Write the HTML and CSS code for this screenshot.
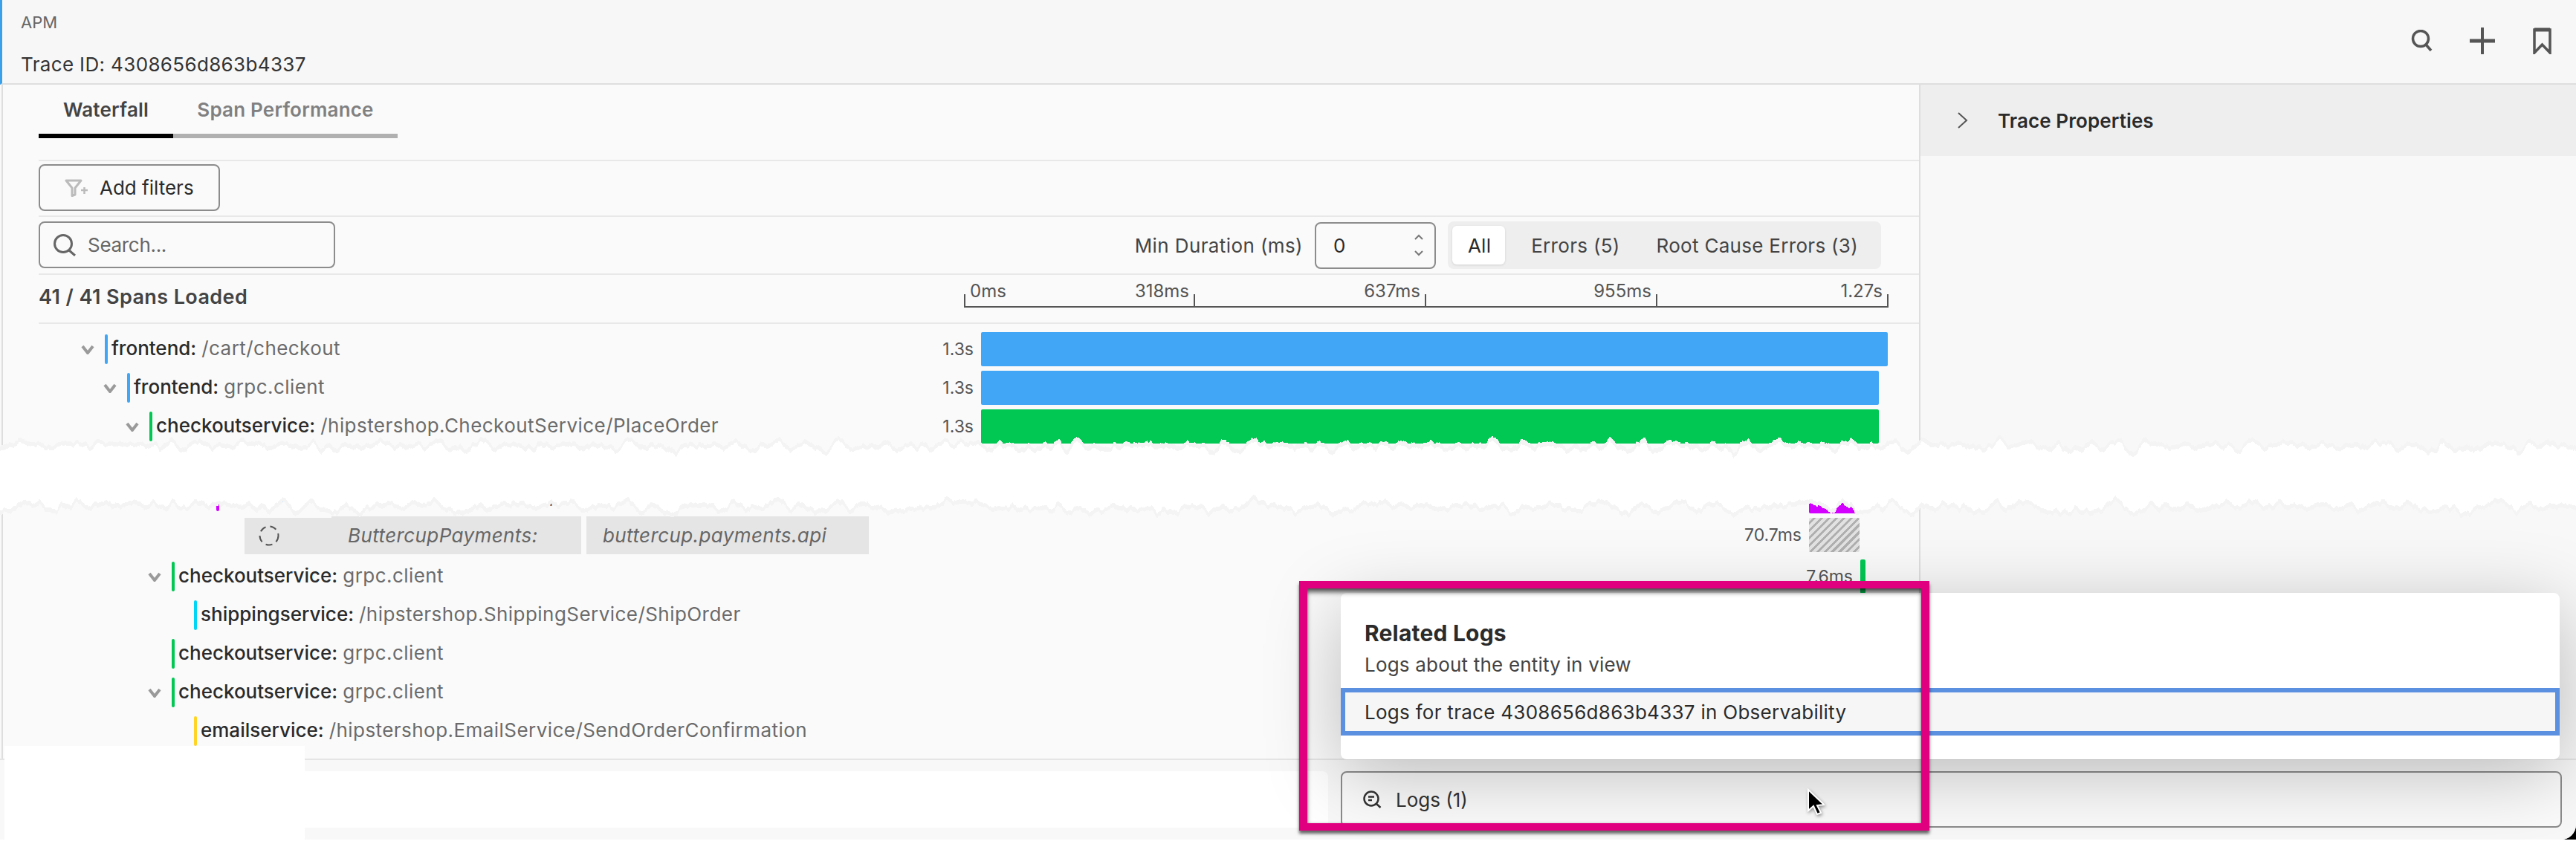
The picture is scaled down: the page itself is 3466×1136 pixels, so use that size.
FILE: index.html
```html
<!DOCTYPE html>
<html lang="en">
<head>
  <meta charset="UTF-8" />
  <title>APM - Trace 4308656d863b4337</title>
  <link rel="stylesheet" href="styles.css">
</head>
<body>
  <div class="app">
    <header class="top-bar">
      <div class="top-title">
        <span class="crumb">APM</span>
        <span class="trace-id">Trace ID: 4308656d863b4337</span>
      </div>
      <div class="top-actions">
        <svg class="icon-search" viewBox="0 0 30 30"><circle cx="13" cy="12" r="10.5"/><path d="M20 20l7 8"/></svg>
        <svg class="icon-plus" viewBox="0 0 36 36"><path class="thin" d="M18 1v34"/><path class="thick" d="M1 18h34"/></svg>
        <svg class="icon-bookmark" viewBox="0 0 25 36"><path d="M2 3h21v31l-10.500-11l-10.500 11z"/><path class="thick" d="M2 3h21"/></svg>
      </div>
    </header>

    <div class="content">
      <main class="main">
        <div class="tabs">
          <div class="tab active">Waterfall</div>
          <div class="tab">Span Performance</div>
        </div>

        <div class="filters">
          <button class="btn-filter">
            <svg class="icon-filter" viewBox="0 0 32 24"><path d="M2 2h20l-8 10v9l-4 1.500v-10.500z"/><path class="plus" d="M22 15h9M26.500 11v9"/></svg>
            Add filters
          </button>
        </div>

        <div class="controls">
          <div class="search">
            <svg viewBox="0 0 32 30"><circle cx="14" cy="13" r="11.500"/><path d="M22 22l8 7"/></svg>
            <span>Search...</span>
          </div>
          <div class="controls-right">
            <span class="min-label">Min Duration (ms)</span>
            <div class="number-input">
              <span>0</span>
              <div class="spinner">
                <svg viewBox="0 0 12 8"><path d="M1 7l5-5l5 5"/></svg>
                <svg viewBox="0 0 12 8"><path d="M1 1l5 5l5-5"/></svg>
              </div>
            </div>
            <div class="segments">
              <div class="seg active">All</div>
              <div class="seg">Errors (5)</div>
              <div class="seg">Root Cause Errors (3)</div>
            </div>
          </div>
        </div>

        <div class="ruler-row">
          <span class="loaded">41 / 41 Spans Loaded</span>
          <div class="ruler">
            <div class="ruler-cell first"><span>0ms</span><span>318ms</span></div>
            <div class="ruler-cell"><span>637ms</span></div>
            <div class="ruler-cell"><span>955ms</span></div>
            <div class="ruler-cell"><span>1.27s</span></div>
          </div>
        </div>

        <div class="rows">
          <div class="row">
            <div class="name depth-0">
              <svg class="chev" viewBox="0 0 18 13"><path d="M2 2l7 9l7-9"/></svg>
              <i class="tick blue"></i><b>frontend:</b> <span>/cart/checkout</span>
            </div>
            <div class="timeline"><span class="dur">1.3s</span><div class="bar blue" style="width:1220px;margin-right:1px"></div></div>
          </div>
          <div class="row">
            <div class="name depth-1">
              <svg class="chev" viewBox="0 0 18 13"><path d="M2 2l7 9l7-9"/></svg>
              <i class="tick blue"></i><b>frontend:</b> <span>grpc.client</span>
            </div>
            <div class="timeline"><span class="dur">1.3s</span><div class="bar blue" style="width:1208px;margin-right:13px"></div></div>
          </div>
          <div class="row">
            <div class="name depth-2">
              <svg class="chev" viewBox="0 0 18 13"><path d="M2 2l7 9l7-9"/></svg>
              <i class="tick green"></i><b>checkoutservice:</b> <span>/hipstershop.CheckoutService/PlaceOrder</span>
            </div>
            <div class="timeline"><span class="dur">1.3s</span><div class="bar green" style="width:1208px;margin-right:13px"></div></div>
          </div>

          <!-- under the torn strip -->
          <div class="row after-tear">
            <div class="name depth-5">
              <i class="tick purple"></i><b class="torn-name">frontend:</b> <span>buttercup.payments.api</span>
            </div>
            <div class="timeline"><div class="bar purple" style="width:68px;margin-right:39px"></div></div>
          </div>
          <div class="row">
            <div class="inferred">
              <div class="inf-cell inf-icon"><svg viewBox="0 0 28 28"><circle cx="14" cy="14" r="12.500"/></svg></div>
              <div class="inf-cell inf-service">ButtercupPayments:</div>
              <div class="inf-cell inf-op">buttercup.payments.api</div>
            </div>
            <div class="timeline"><span class="dur">70.7ms</span><div class="bar hatch" style="width:68px;margin-right:39px"></div></div>
          </div>
          <div class="row gap-top">
            <div class="name depth-3">
              <svg class="chev" viewBox="0 0 18 13"><path d="M2 2l7 9l7-9"/></svg>
              <i class="tick green"></i><b>checkoutservice:</b> <span>grpc.client</span>
            </div>
            <div class="timeline"><span class="dur">7.6ms</span><div class="bar green" style="width:7px;margin-right:31px"></div></div>
          </div>
          <div class="row">
            <div class="name depth-4"><i class="tick cyan"></i><b>shippingservice:</b> <span>/hipstershop.ShippingService/ShipOrder</span></div>
          </div>
          <div class="row">
            <div class="name depth-3 no-chev"><i class="tick green"></i><b>checkoutservice:</b> <span>grpc.client</span></div>
          </div>
          <div class="row">
            <div class="name depth-3">
              <svg class="chev" viewBox="0 0 18 13"><path d="M2 2l7 9l7-9"/></svg>
              <i class="tick green"></i><b>checkoutservice:</b> <span>grpc.client</span>
            </div>
          </div>
          <div class="row">
            <div class="name depth-4"><i class="tick yellow"></i><b>emailservice:</b> <span>/hipstershop.EmailService/SendOrderConfirmation</span></div>
          </div>
        </div>
      </main>

      <aside class="side">
        <div class="side-head">
          <svg viewBox="0 0 14 22"><path d="M1 1l11 10l-11 10"/></svg>
          <span>Trace Properties</span>
        </div>
      </aside>
    </div>

    <footer class="bottom-bar">
      <div class="bottom-left"></div>
      <div class="logs-btn">
        <svg viewBox="0 0 25 24"><circle cx="11" cy="11" r="9.500"/><path d="M7 8.500h8M7 13h5M17.500 17.500l6 5.500"/></svg>
        <span>Logs (1)</span>
      </div>
    </footer>

    <!-- Hidden by default in the app, open here -->
    <div class="popover">
      <h2>Related Logs</h2>
      <p>Logs about the entity in view</p>
      <div class="pop-item">Logs for trace 4308656d863b4337 in Observability</div>
    </div>

    <div class="callout"></div>
    <svg class="cursor" viewBox="0 0 24 38"><path d="M2 2v28l7-6l5 11l5-2l-5-10l9-1z"/></svg>

    <svg class="tear" viewBox="0 0 3466 150">
      <filter id="rough" filterUnits="userSpaceOnUse" x="0" y="0" width="3466" height="150" color-interpolation-filters="sRGB">
        <feTurbulence type="fractalNoise" baseFrequency="0.05 0.004" numOctaves="5" seed="7"/>
        <feColorMatrix type="matrix" values="0 0 0 0 0.5  0 1 0 0 0  0 0 0 0 0.5  0 0 0 0 1"/>
        <feDisplacementMap in="SourceGraphic" scale="34" xChannelSelector="R" yChannelSelector="G"/>
      </filter>
      <rect class="tear-haze" x="-60" y="27" width="3590" height="89" filter="url(#rough)"/>
      <rect class="tear-white" x="-60" y="33" width="3590" height="77" filter="url(#rough)"/>
    </svg>

    <div class="patch"></div>
  </div>
</body>
</html>
```

FILE: styles.css
```css
html, body {
  margin: 0;
  padding: 0;
  height: 100%;
  background: #fff;
  font-family: Inter, 'Noto Sans', sans-serif;
  color: #2b2b2b;
  overflow: hidden;
}

body {
  background: linear-gradient(#000, #000) right 0 top 1110px / 20px 20px no-repeat #fff;
}

.app {
  position: relative;
  width: 3466px;
  height: 1130px;
  background: #f9f9f9;
  border-bottom-right-radius: 20px;
  overflow: hidden;
  display: flex;
  flex-direction: column;
  font-size: 26px;
}

/* TOP BAR */
.top-bar {
  height: 112px;
  flex: none;
  display: flex;
  justify-content: space-between;
  align-items: center;
  padding: 0 33px 0 25px;
  background: #f7f7f7;
  border-left: 3px solid #3aa0ea;
  border-bottom: 2px solid #dedede;
}

.top-title {
  display: flex;
  flex-direction: column;
  gap: 25px;
  padding-top: 9px;
}

.crumb {
  font-size: 22px;
  line-height: 28px;
  color: #666;
}

.trace-id {
  font-size: 26px;
  line-height: 36px;
  letter-spacing: 0.35px;
  color: #333;
}

.top-actions {
  display: flex;
  align-items: center;
  gap: 48px;
  padding-bottom: 2px;
}

.top-actions svg {
  fill: none;
  stroke: #555;
  stroke-width: 3.5;
  display: block;
}

.icon-search { width: 30px; height: 30px; }
.icon-plus { width: 36px; height: 36px; }
.icon-bookmark { width: 25px; height: 36px; margin-left: 2px; }
.top-actions .thin { stroke-width: 4; stroke-linecap: round; }
.top-actions .thick { stroke-width: 5; }

/* MAIN AREA */
.content {
  height: 907px;
  flex: none;
  display: flex;
}

.main {
  width: 2578px;
  flex: none;
  border-left: 2px solid #dedede;
  margin-left: 2px;
  background: #fafafa;
}

.tabs,
.filters,
.controls,
.ruler-row {
  margin-left: 48px;
  border-bottom: 2px solid #e8e8e8;
  box-sizing: border-box;
  display: flex;
}

.tabs {
  height: 103px;
  padding-top: 6px;
  align-items: flex-start;
}

.tab {
  height: 54px;
  padding: 0 0 6px;
  display: flex;
  align-items: center;
  justify-content: center;
  width: 302px;
  border-bottom: 6px solid #b0b0b0;
  font-weight: 600;
  letter-spacing: 0.2px;
  color: #808080;
}

.tab.active {
  width: 181px;
  color: #444;
  border-bottom-color: #000;
}

.filters {
  height: 75px;
  padding-top: 4px;
  align-items: flex-start;
}

.btn-filter {
  width: 244px;
  height: 63px;
  box-sizing: border-box;
  border: 2px solid #8c8c8c;
  border-radius: 8px;
  background: transparent;
  padding: 0 0 0 33px;
  display: flex;
  align-items: center;
  gap: 15px;
  font: inherit;
  color: #2b2b2b;
}

.icon-filter {
  width: 32px;
  height: 24px;
  fill: none;
  stroke: #bbb;
  stroke-width: 3;
  stroke-linejoin: round;
}

.icon-filter .plus { stroke-width: 2.5; }

.controls {
  height: 78px;
  padding-top: 6px;
  align-items: flex-start;
  justify-content: space-between;
}

.search {
  width: 399px;
  height: 63px;
  box-sizing: border-box;
  border: 2px solid #8c8c8c;
  border-radius: 8px;
  display: flex;
  align-items: center;
  gap: 15px;
  padding-left: 17px;
  letter-spacing: -0.3px;
  color: #666;
}

.search svg {
  width: 32px;
  height: 30px;
  fill: none;
  stroke: #666;
  stroke-width: 3;
}

.controls-right {
  display: flex;
  align-items: center;
  gap: 16px;
  margin-right: 51px;
}

.min-label {
  letter-spacing: 0.4px;
  color: #444;
}

.number-input {
  width: 163px;
  height: 63px;
  box-sizing: border-box;
  border: 2px solid #8c8c8c;
  border-radius: 8px;
  display: flex;
  align-items: center;
  justify-content: space-between;
  padding: 0 15px 0 23px;
}

.spinner {
  display: flex;
  flex-direction: column;
  gap: 14px;
}

.spinner svg {
  display: block;
  width: 12px;
  height: 8px;
  fill: none;
  stroke: #777;
  stroke-width: 2;
}

.segments {
  width: 583px;
  height: 64px;
  box-sizing: border-box;
  padding: 6px;
  background: #eee;
  border-radius: 8px;
  display: flex;
  align-items: center;
  letter-spacing: 0.3px;
  color: #444;
}

.seg {
  height: 52px;
  display: flex;
  align-items: center;
  padding: 0 25px;
  white-space: nowrap;
}

.seg.active {
  width: 80px;
  box-sizing: border-box;
  justify-content: center;
  padding: 0 0 0 2px;
  background: #fff;
  border-radius: 6px;
  color: #2b2b2b;
  box-shadow: 0 1px 3px rgba(0,0,0,0.12);
}

.seg.active + .seg { padding-left: 35px; }
.seg.active + .seg + .seg { padding-left: 24px; }

.ruler-row {
  height: 66px;
  justify-content: space-between;
  align-items: flex-start;
}

.loaded {
  font-size: 27px;
  font-weight: 600;
  letter-spacing: 0.4px;
  line-height: 32px;
  margin-top: 14px;
  color: #444;
}

.ruler {
  width: 1244px;
  margin: 4px 41px 0 0;
  display: flex;
  border-bottom: 2px solid #555;
}

.ruler-cell {
  flex: 1;
  height: 32px;
  display: flex;
  justify-content: flex-end;
  align-items: flex-start;
  padding: 6px 8px 0;
  font-size: 24px;
  line-height: 24px;
  color: #555;
  background: linear-gradient(#555, #555) right bottom / 2px 16px no-repeat;
}

.ruler-cell.first {
  justify-content: space-between;
  background:
    linear-gradient(#555, #555) right bottom / 2px 16px no-repeat,
    linear-gradient(#555, #555) left bottom / 2px 16px no-repeat;
}

/* WATERFALL ROWS */
.rows {
  padding: 8px 41px 0 0;
  margin-left: 48px;
}

.row {
  height: 52px;
  display: flex;
  align-items: center;
  justify-content: space-between;
}

.row.after-tear { margin-top: 42px; }
.row.gap-top { margin-top: 4px; }

.name {
  display: flex;
  align-items: center;
  white-space: nowrap;
  color: #6b6b6b;
}

.name span {
  letter-spacing: 0.45px;
  padding-bottom: 4px;
}

.name b {
  font-weight: 500;
  color: #2b2b2b;
  margin: 0 7px 0 5px;
  padding-bottom: 4px;
}

.depth-0 { margin-left: 57px; }
.depth-1 { margin-left: 87px; }
.depth-2 { margin-left: 117px; }
.depth-3 { margin-left: 147px; }
.depth-4 { margin-left: 209px; }
.depth-5 { margin-left: 239px; }
.no-chev { margin-left: 179px; }

.torn-name { margin-left: 45px !important; }

.chev {
  width: 18px;
  height: 13px;
  margin-right: 14px;
  fill: none;
  stroke: #9a9a9a;
  stroke-width: 4;
}

.tick {
  width: 4px;
  height: 40px;
  border-radius: 2px;
}

.blue { background: #42a6f6; }
.green { background: #00c853; }
.purple { background: #d400ff; }
.cyan { background: #00d5f5; }
.yellow { background: #ffd426; }

.timeline {
  width: 1300px;
  flex: none;
  display: flex;
  justify-content: flex-end;
  align-items: center;
  margin-left: auto;
}

.dur {
  font-size: 23px;
  color: #555;
  margin-right: 10px;
}

.bar {
  height: 46px;
  border-radius: 2px;
}

.hatch {
  background: repeating-linear-gradient(135deg, #e2e2e2 0 4px, #b0b0b0 4px 7px);
}

.inferred {
  display: flex;
  align-items: stretch;
  height: 51px;
  margin-left: 277px;
  font-style: italic;
  letter-spacing: 0.4px;
  color: #666;
}

.inf-cell {
  background: #e5e5e5;
  display: flex;
  align-items: center;
}

.inf-icon {
  width: 117px;
  margin-top: 2px;
  padding-left: 19px;
  box-sizing: border-box;
}

.inf-icon svg {
  width: 28px;
  height: 28px;
  fill: none;
  stroke: #555;
  stroke-width: 2;
  stroke-dasharray: 9 6;
}

.inf-service {
  width: 336px;
  padding-left: 22px;
  box-sizing: border-box;
}

.inf-op {
  width: 380px;
  margin-left: 7px;
  padding-left: 22px;
  box-sizing: border-box;
}

/* RIGHT PANEL */
.side {
  flex: 1;
  border-left: 2px solid #dedede;
  background: #f8f8f8;
}

.side-head {
  height: 96px;
  background: #eee;
  display: flex;
  align-items: center;
  gap: 40px;
  padding-left: 50px;
  font-weight: 600;
  letter-spacing: 0.1px;
}

.side-head svg {
  width: 14px;
  height: 22px;
  fill: none;
  stroke: #555;
  stroke-width: 2;
}

/* BOTTOM BAR */
.bottom-bar {
  flex: 1;
  display: flex;
  gap: 17px;
  padding: 15px 19px 0 20px;
  border-top: 2px solid #e5e5e5;
  background: #f8f8f8;
}

.bottom-left {
  flex: 1;
  height: 76px;
  background: #fff;
  border-radius: 8px;
}

.logs-btn {
  width: 1643px;
  height: 76px;
  box-sizing: border-box;
  border: 2px solid #8c8c8c;
  border-radius: 8px;
  background: #fbfbfb;
  display: flex;
  align-items: center;
  gap: 19px;
  padding-left: 28px;
  color: #333;
}

.logs-btn svg {
  width: 25px;
  height: 24px;
  fill: none;
  stroke: #333;
  stroke-width: 2.5;
}

/* POPOVER */
.popover {
  position: absolute;
  left: 1804px;
  top: 798px;
  width: 1640px;
  height: 224px;
  background: #fff;
  border-radius: 8px;
  box-shadow: 0 20px 100px rgba(0,0,0,0.25);
  padding-top: 36px;
  box-sizing: border-box;
}

.popover h2 {
  margin: 0 0 0 32px;
  font-size: 30px;
  line-height: 36px;
  font-weight: 700;
  letter-spacing: 0.2px;
  color: #2b2b2b;
}

.popover p {
  margin: 7px 0 13px 32px;
  line-height: 36px;
  letter-spacing: 0.2px;
  color: #444;
}

.pop-item {
  height: 64px;
  box-sizing: border-box;
  border: 6px solid #5b8fe0;
  background: #f6f6f6;
  display: flex;
  align-items: center;
  padding-left: 26px;
  letter-spacing: 0.28px;
  color: #2b2b2b;
}

/* ANNOTATION */
.callout {
  position: absolute;
  left: 1748px;
  top: 782px;
  width: 848px;
  height: 336px;
  box-sizing: border-box;
  border: solid #e0007f;
  border-width: 10px 11px;
  box-shadow:
    0 4px 4px rgba(0,0,0,0.6),
    inset 0 6px 6px -1px rgba(0,0,0,0.65),
    inset 0 0 3px rgba(0,0,0,0.25);
}

.cursor {
  position: absolute;
  left: 2431px;
  top: 1061px;
  width: 24px;
  height: 38px;
  fill: #000;
  stroke: #fff;
  stroke-width: 2;
  filter: drop-shadow(1px 2px 2px rgba(0,0,0,0.4));
}

.tear {
  position: absolute;
  left: 0;
  top: 570px;
  width: 3466px;
  height: 150px;
}

.tear-haze { fill: #f4f4f4; }
.tear-white { fill: #fff; }

.patch {
  position: absolute;
  left: 6px;
  top: 1004px;
  width: 404px;
  height: 126px;
  background: #fff;
}
```
